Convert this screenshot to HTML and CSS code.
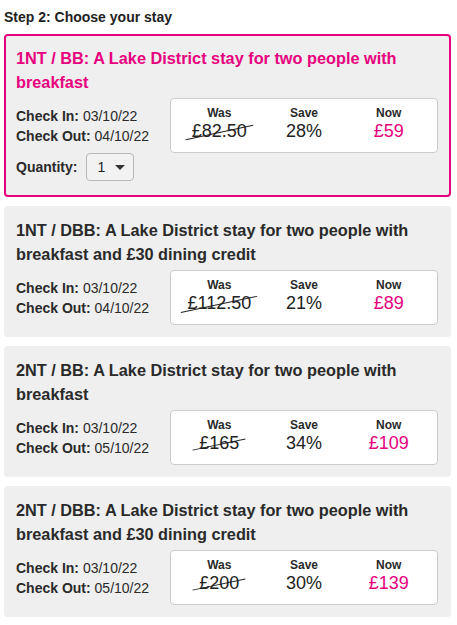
FILE: index.html
```html
<!DOCTYPE html>
<html lang="en">
<head>
<meta charset="utf-8">
<title>Choose your stay</title>
<link rel="stylesheet" href="styles.css">
</head>
<body>
<div class="page">
  <h2 class="step-title">Step 2: Choose your stay</h2>
  <div class="stays">
    <div class="stay stay--selected">
      <h3 class="stay-title">1NT / BB: A Lake District stay for two people with breakfast</h3>
      <div class="stay-body">
        <div class="dates">
          <div><b>Check In:</b> 03/10/22</div>
          <div><b>Check Out:</b> 04/10/22</div>
        </div>
        <div class="prices">
          <div class="price-col"><div class="price-label">Was</div><div class="price-val"><span class="was">£82.50</span></div></div>
          <div class="price-col"><div class="price-label">Save</div><div class="price-val">28%</div></div>
          <div class="price-col"><div class="price-label">Now</div><div class="price-val now">£59</div></div>
        </div>
      </div>
      <div class="quantity">
        <b class="quantity-label">Quantity:</b>
        <div class="select"><span class="select-value">1</span><span class="caret"></span></div>
      </div>
    </div>

    <div class="stay">
      <h3 class="stay-title">1NT / DBB: A Lake District stay for two people with breakfast and £30 dining credit</h3>
      <div class="stay-body">
        <div class="dates">
          <div><b>Check In:</b> 03/10/22</div>
          <div><b>Check Out:</b> 04/10/22</div>
        </div>
        <div class="prices">
          <div class="price-col"><div class="price-label">Was</div><div class="price-val"><span class="was">£112.50</span></div></div>
          <div class="price-col"><div class="price-label">Save</div><div class="price-val">21%</div></div>
          <div class="price-col"><div class="price-label">Now</div><div class="price-val now">£89</div></div>
        </div>
      </div>
    </div>

    <div class="stay">
      <h3 class="stay-title">2NT / BB: A Lake District stay for two people with breakfast</h3>
      <div class="stay-body">
        <div class="dates">
          <div><b>Check In:</b> 03/10/22</div>
          <div><b>Check Out:</b> 05/10/22</div>
        </div>
        <div class="prices">
          <div class="price-col"><div class="price-label">Was</div><div class="price-val"><span class="was">£165</span></div></div>
          <div class="price-col"><div class="price-label">Save</div><div class="price-val">34%</div></div>
          <div class="price-col"><div class="price-label">Now</div><div class="price-val now">£109</div></div>
        </div>
      </div>
    </div>

    <div class="stay">
      <h3 class="stay-title">2NT / DBB: A Lake District stay for two people with breakfast and £30 dining credit</h3>
      <div class="stay-body">
        <div class="dates">
          <div><b>Check In:</b> 03/10/22</div>
          <div><b>Check Out:</b> 05/10/22</div>
        </div>
        <div class="prices">
          <div class="price-col"><div class="price-label">Was</div><div class="price-val"><span class="was">£200</span></div></div>
          <div class="price-col"><div class="price-label">Save</div><div class="price-val">30%</div></div>
          <div class="price-col"><div class="price-label">Now</div><div class="price-val now">£139</div></div>
        </div>
      </div>
    </div>
  </div>
</div>
</body>
</html>
```

FILE: styles.css
```css
html, body {
  margin: 0;
  padding: 0;
  background: #ffffff;
}

body {
  font-family: "Liberation Sans", Arial, Helvetica, sans-serif;
  color: #222222;
}

.page {
  padding: 8px 6px 4px 4px;
}

.step-title {
  margin: 0 0 8px 0;
  font-size: 14px;
  line-height: 18px;
  font-weight: bold;
  color: #222222;
}

.stays {
  display: flex;
  flex-direction: column;
  gap: 9px;
}

.stay {
  background: #efefef;
  border: 2px solid transparent;
  border-radius: 4px;
  padding: 10px 10px 10px 10px;
}

.stay--selected {
  border-color: #e6007e;
}

.stay-title {
  margin: 0;
  font-size: 16.3px;
  line-height: 24px;
  font-weight: bold;
  color: #2a2a2a;
}

.stay--selected .stay-title {
  color: #e6007e;
}

.stay-body {
  display: grid;
  grid-template-columns: 154px 1fr;
  align-items: center;
  margin-top: 4px;
}

.dates {
  font-size: 14px;
  line-height: 20px;
  color: #2a2a2a;
}

.dates b {
  font-weight: bold;
}

.prices {
  display: grid;
  grid-template-columns: 1fr 1fr 1fr;
  background: #ffffff;
  border: 1px solid #cccccc;
  border-radius: 4px;
  padding: 7px 6px 10px 6px;
  margin-right: 1px;
  text-align: center;
}

.price-label {
  font-size: 12px;
  line-height: 14px;
  font-weight: bold;
  color: #2a2a2a;
}

.price-val {
  font-size: 18px;
  line-height: 22px;
  color: #222222;
}

.price-val.now {
  color: #e6007e;
}

.was {
  position: relative;
  display: inline-block;
}

.was::after {
  content: "";
  position: absolute;
  left: -7px;
  right: -7px;
  top: 50%;
  height: 1.3px;
  background: #222222;
  transform: translateY(1px) rotate(-12deg);
}

.quantity {
  display: flex;
  align-items: center;
  gap: 9px;
  margin-top: 0;
  padding-bottom: 4px;
}

.quantity-label {
  font-size: 14px;
  font-weight: bold;
  color: #2a2a2a;
}

.select {
  display: flex;
  align-items: center;
  justify-content: space-between;
  width: 48px;
  height: 28px;
  box-sizing: border-box;
  border: 1px solid #b8b8b8;
  border-radius: 4px;
  background: #f2f2f2;
  padding: 0 8px 0 10px;
  font-size: 14px;
  color: #222222;
}

.caret {
  width: 0;
  height: 0;
  border-left: 5px solid transparent;
  border-right: 5px solid transparent;
  border-top: 5px solid #333333;
}
```
